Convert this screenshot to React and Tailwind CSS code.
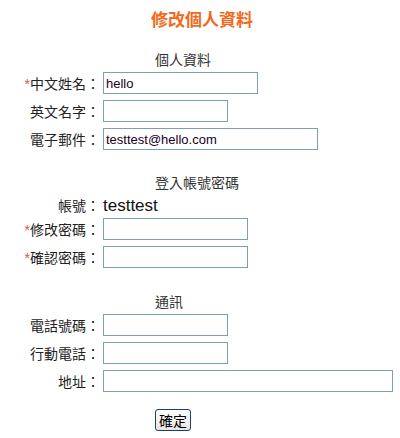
import React from 'react'

const cjk = { fontFamily: '"Noto Sans CJK TC", "Noto Sans", sans-serif' }

const Field = ({ label, required, width, value = '' }) => (
  <div className="flex items-center h-[28px]">
    <div className="w-[100px] text-right text-[14px] leading-none text-[#222]" style={cjk}>
      {required && <span className="text-[#e0524a]" style={{ fontFamily: '"Liberation Sans", sans-serif' }}>*</span>}
      {label}：
    </div>
    <input
      type="text"
      defaultValue={value}
      className={`ml-[3px] h-[22px] ${width} border border-[#7f9db9] bg-white px-[2px] text-[13px] text-[#200020] outline-none`}
      style={{ fontFamily: '"Liberation Sans", Arial, sans-serif' }}
    />
  </div>
)

const Section = ({ title, className = '' }) => (
  <div className={`h-[20px] flex items-center pl-[155px] text-[14px] leading-none text-[#333] ${className}`} style={cjk}>
    {title}
  </div>
)

export default function App() {
  return (
    <div className="w-[400px] h-[438px] bg-white">
      <div className="h-[36px] flex items-center justify-center pl-[4px]">
        <h1 className="text-[17px] font-bold leading-none text-[#f26a22]" style={cjk}>
          修改個人資料
        </h1>
      </div>

      <Section title="個人資料" className="mt-[13px]" />
      <Field label="中文姓名" required width="w-[155px]" value="hello" />
      <Field label="英文名字" width="w-[125px]" />
      <Field label="電子郵件" width="w-[215px]" value="testtest@hello.com" />

      <Section title="登入帳號密碼" className="mt-[19px]" />
      <div className="flex items-center h-[23px] pt-[3px]">
        <div className="w-[100px] text-right text-[14px] leading-none text-[#222]" style={cjk}>帳號：</div>
        <span className="ml-[3px] text-[17px] leading-none text-[#111]" style={{ fontFamily: '"Liberation Sans", Arial, sans-serif' }}>
          testtest
        </span>
      </div>
      <Field label="修改密碼" required width="w-[145px]" />
      <Field label="確認密碼" required width="w-[145px]" />

      <Section title="通訊" className="mt-[20px]" />
      <Field label="電話號碼" width="w-[125px]" />
      <Field label="行動電話" width="w-[125px]" />
      <Field label="地址" width="w-[290px]" />

      <div className="mt-[13px] pl-[155px]">
        <button
          type="button"
          className="h-[22px] w-[36px] rounded-[3px] border border-[#1c3f6e] bg-gradient-to-b from-[#fefefe] to-[#e8e6de] text-[14px] leading-none text-black"
          style={cjk}
        >
          確定
        </button>
      </div>
    </div>
  )
}
